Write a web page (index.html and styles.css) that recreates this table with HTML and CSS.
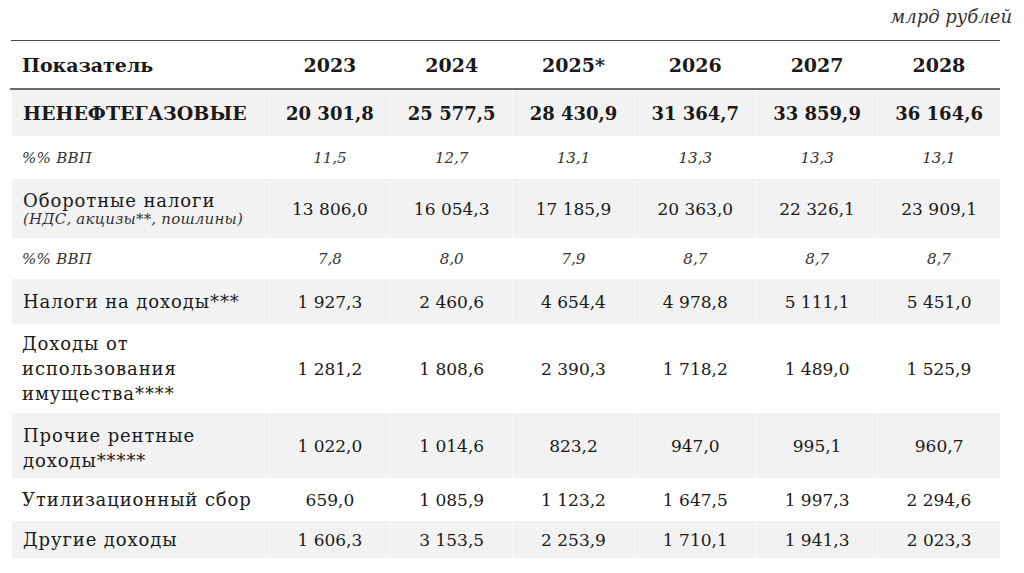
FILE: index.html
```html
<!DOCTYPE html>
<html lang="ru">
<head>
<meta charset="utf-8">
<title>Ненефтегазовые доходы</title>
<link rel="stylesheet" href="styles.css">
</head>
<body>
<div class="page">
  <div class="unit">млрд рублей</div>
  <table class="data">
    <colgroup>
      <col class="c-name">
      <col class="c-year"><col class="c-year"><col class="c-year">
      <col class="c-year"><col class="c-year"><col class="c-year">
    </colgroup>
    <thead>
      <tr class="r-head">
        <th class="name">Показатель</th>
        <th>2023</th><th>2024</th><th>2025*</th><th>2026</th><th>2027</th><th>2028</th>
      </tr>
    </thead>
    <tbody>
      <tr class="r-total shade">
        <td class="name">НЕНЕФТЕГАЗОВЫЕ</td>
        <td>20 301,8</td><td>25 577,5</td><td>28 430,9</td><td>31 364,7</td><td>33 859,9</td><td>36 164,6</td>
      </tr>
      <tr class="r-pct r-pct1">
        <td class="name">%% ВВП</td>
        <td>11,5</td><td>12,7</td><td>13,1</td><td>13,3</td><td>13,3</td><td>13,1</td>
      </tr>
      <tr class="r-turn shade">
        <td class="name">Оборотные налоги<span class="sub">(НДС, акцизы**, пошлины)</span></td>
        <td>13 806,0</td><td>16 054,3</td><td>17 185,9</td><td>20 363,0</td><td>22 326,1</td><td>23 909,1</td>
      </tr>
      <tr class="r-pct r-pct2">
        <td class="name">%% ВВП</td>
        <td>7,8</td><td>8,0</td><td>7,9</td><td>8,7</td><td>8,7</td><td>8,7</td>
      </tr>
      <tr class="r-inc shade">
        <td class="name">Налоги на доходы***</td>
        <td>1 927,3</td><td>2 460,6</td><td>4 654,4</td><td>4 978,8</td><td>5 111,1</td><td>5 451,0</td>
      </tr>
      <tr class="r-prop">
        <td class="name">Доходы от использования имущества****</td>
        <td>1 281,2</td><td>1 808,6</td><td>2 390,3</td><td>1 718,2</td><td>1 489,0</td><td>1 525,9</td>
      </tr>
      <tr class="r-rent shade">
        <td class="name">Прочие рентные доходы*****</td>
        <td>1 022,0</td><td>1 014,6</td><td>823,2</td><td>947,0</td><td>995,1</td><td>960,7</td>
      </tr>
      <tr class="r-util">
        <td class="name">Утилизационный сбор</td>
        <td>659,0</td><td>1 085,9</td><td>1 123,2</td><td>1 647,5</td><td>1 997,3</td><td>2 294,6</td>
      </tr>
      <tr class="r-other shade">
        <td class="name">Другие доходы</td>
        <td>1 606,3</td><td>3 153,5</td><td>2 253,9</td><td>1 710,1</td><td>1 941,3</td><td>2 023,3</td>
      </tr>
    </tbody>
  </table>
</div>
</body>
</html>
```
FILE: styles.css
```css
html, body {
  margin: 0;
  padding: 0;
  background: #ffffff;
}

body {
  font-family: "DejaVu Serif", "Liberation Serif", serif;
  color: #1a1a1a;
}

.page {
  width: 1024px;
  height: 573px;
  padding: 0 0 0 10px;
  box-sizing: border-box;
}

.unit {
  width: 1002px;
  height: 40px;
  box-sizing: border-box;
  padding-top: 6px;
  text-align: right;
  font-style: italic;
  font-size: 18px;
  color: #333;
}

.data {
  width: 989px;
  table-layout: fixed;
  border-collapse: collapse;
  border-spacing: 0;
}

.c-name { width: 258px; }
.c-year { width: 121.8px; }

.data th,
.data td {
  padding: 0;
  text-align: center;
  vertical-align: middle;
  font-size: 17px;
  font-weight: normal;
}

.data .name {
  text-align: left;
  padding-left: 11px;
  font-size: 18px;
  letter-spacing: 0.9px;
}

.r-head th {
  height: 47px;
  font-weight: bold;
  font-size: 19px;
  border-top: 1px solid #4a4a4a;
  border-bottom: 2px solid #6a6a6a;
}

.r-head th.name {
  font-size: 19px;
  letter-spacing: 0;
}

.shade td {
  background: #f2f2f2;
  border-left: 1px solid #fafafa;
}

.shade td.name {
  border-left: 2px solid #ffffff;
}

.r-total td {
  height: 46px;
  font-weight: bold;
  font-size: 18px;
}

.r-total td.name {
  font-size: 19px;
  letter-spacing: 0;
}

.r-pct td {
  font-style: italic;
  font-size: 15px;
  color: #333;
}

.r-pct td.name {
  font-size: 15px;
  letter-spacing: 0.3px;
}

.r-pct1 td { height: 43px; }
.r-pct2 td { height: 41px; }

.r-turn td { height: 59px; }

.r-turn .name {
  line-height: 21px;
}

.sub {
  display: block;
  font-style: italic;
  font-size: 15px;
  letter-spacing: 0.2px;
  line-height: 17px;
  color: #333;
}

.r-inc td { height: 45px; }

.r-prop td { height: 89px; }
.r-prop .name {
  line-height: 25px;
  padding-right: 50px;
}

.r-rent td { height: 65px; }
.r-rent .name {
  line-height: 25px;
  padding-right: 50px;
  padding-top: 4px;
  height: 61px;
}

.r-util td { height: 43px; }
.r-other td { height: 37px; }
```
